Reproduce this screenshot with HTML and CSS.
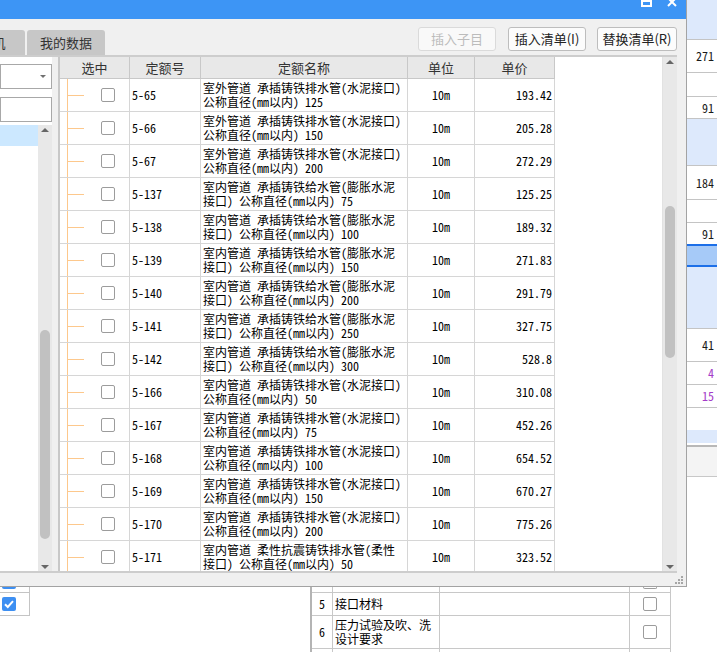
FILE: index.html
```html
<!DOCTYPE html>
<html lang="zh-CN">
<head>
<meta charset="utf-8">
<title>查询</title>
<link rel="stylesheet" href="styles.css">
</head>
<body>
<div class="desktop">
  <div class="bg">
    <div class="bg-main">
      <div class="bottom">
        <div class="lcell">
          <div class="lrow0"><div class="stub-blue"></div></div>
          <div class="lrow1">
            <div class="cb-on"><svg width="14" height="14" viewBox="0 0 14 14"><path d="M3 7.2 L5.8 10 L11 4.2" fill="none" stroke="#fff" stroke-width="2"/></svg></div>
          </div>
        </div>
        <div class="btable">
          <div class="bc"></div><div class="bc"></div><div class="bc"></div><div class="bc bc-top"><div class="stub-gray"></div></div>
          <div class="bc bc-num">5</div><div class="bc bc-txt">接口材料</div><div class="bc"></div><div class="bc bc-chk"><div class="cb"></div></div>
          <div class="bc bc-num">6</div><div class="bc bc-txt">压力试验及吹、洗<br>设计要求</div><div class="bc"></div><div class="bc bc-chk"><div class="cb"></div></div>
          <div class="bc bc-last"></div><div class="bc bc-last"></div><div class="bc bc-last"></div><div class="bc bc-last"></div>
        </div>
      </div>
    </div>
    <div class="strip">
      <div class="srow lb h40"></div>
      <div class="srow h33">271</div>
      <div class="srow h24"></div>
      <div class="srow h22">91</div>
      <div class="srow lb h47"></div>
      <div class="srow h34">184</div>
      <div class="srow h23"></div>
      <div class="srow h21 nob">91</div>
      <div class="srow hl"></div>
      <div class="srow lb h62"></div>
      <div class="srow h33">41</div>
      <div class="srow h23 purple">4</div>
      <div class="srow h23 purple">15</div>
      <div class="srow h22 nob"></div>
      <div class="srow lb h13 nob"></div>
      <div class="srow h2 nob"></div>
      <div class="srow gray-band"></div>
    </div>
  </div>

  <div class="dialog">
    <div class="titlebar">
      <svg class="tb-icon" width="11" height="8" viewBox="0 0 11 8"><rect x="1" y="1" width="9" height="5" fill="none" stroke="#fff" stroke-width="2"/></svg>
      <svg class="tb-icon" width="10" height="7" viewBox="0 0 10 7"><path d="M1 -2 L9 6 M9 -2 L1 6" stroke="#fff" stroke-width="2"/></svg>
    </div>
    <div class="toolbar">
      <div class="tabs">
        <div class="tab">人材机</div>
        <div class="tab">我的数据</div>
      </div>
      <div class="actions">
        <div class="btn btn-dis w78">插入子目</div>
        <div class="btn w78 ml12">插入清单(I)</div>
        <div class="btn w80 ml11">替换清单(R)</div>
      </div>
    </div>
    <div class="content">
      <div class="left">
        <div class="combo"><span class="tri-down"></span></div>
        <div class="textbox"></div>
        <div class="tree">
          <div class="tree-items"><div class="tree-sel"></div></div>
          <div class="vscroll vs-left">
            <div class="arr"><span class="tri-up"></span></div>
            <div class="track"><div class="thumb thumb-left"></div></div>
            <div class="arr arr-bottom"><span class="tri-down dark"></span></div>
          </div>
        </div>
      </div>
      <div class="grid">
        <div class="table">
          <div class="thead">
            <div class="th">选中</div>
            <div class="th">定额号</div>
            <div class="th">定额名称</div>
            <div class="th">单位</div>
            <div class="th">单价</div>
          </div>
          <div class="tbody">
            <div class="tr"><div class="td tree-cell"><div class="cb"></div></div><div class="td">5-65</div><div class="td name">室外管道 承插铸铁排水管(水泥接口)<br>公称直径(mm以内) 125</div><div class="td unit">10m</div><div class="td price">193.42</div></div>
            <div class="tr"><div class="td tree-cell"><div class="cb"></div></div><div class="td">5-66</div><div class="td name">室外管道 承插铸铁排水管(水泥接口)<br>公称直径(mm以内) 150</div><div class="td unit">10m</div><div class="td price">205.28</div></div>
            <div class="tr"><div class="td tree-cell"><div class="cb"></div></div><div class="td">5-67</div><div class="td name">室外管道 承插铸铁排水管(水泥接口)<br>公称直径(mm以内) 200</div><div class="td unit">10m</div><div class="td price">272.29</div></div>
            <div class="tr"><div class="td tree-cell"><div class="cb"></div></div><div class="td">5-137</div><div class="td name">室内管道 承插铸铁给水管(膨胀水泥<br>接口) 公称直径(mm以内) 75</div><div class="td unit">10m</div><div class="td price">125.25</div></div>
            <div class="tr"><div class="td tree-cell"><div class="cb"></div></div><div class="td">5-138</div><div class="td name">室内管道 承插铸铁给水管(膨胀水泥<br>接口) 公称直径(mm以内) 100</div><div class="td unit">10m</div><div class="td price">189.32</div></div>
            <div class="tr"><div class="td tree-cell"><div class="cb"></div></div><div class="td">5-139</div><div class="td name">室内管道 承插铸铁给水管(膨胀水泥<br>接口) 公称直径(mm以内) 150</div><div class="td unit">10m</div><div class="td price">271.83</div></div>
            <div class="tr"><div class="td tree-cell"><div class="cb"></div></div><div class="td">5-140</div><div class="td name">室内管道 承插铸铁给水管(膨胀水泥<br>接口) 公称直径(mm以内) 200</div><div class="td unit">10m</div><div class="td price">291.79</div></div>
            <div class="tr"><div class="td tree-cell"><div class="cb"></div></div><div class="td">5-141</div><div class="td name">室内管道 承插铸铁给水管(膨胀水泥<br>接口) 公称直径(mm以内) 250</div><div class="td unit">10m</div><div class="td price">327.75</div></div>
            <div class="tr"><div class="td tree-cell"><div class="cb"></div></div><div class="td">5-142</div><div class="td name">室内管道 承插铸铁给水管(膨胀水泥<br>接口) 公称直径(mm以内) 300</div><div class="td unit">10m</div><div class="td price">528.8</div></div>
            <div class="tr"><div class="td tree-cell"><div class="cb"></div></div><div class="td">5-166</div><div class="td name">室内管道 承插铸铁排水管(水泥接口)<br>公称直径(mm以内) 50</div><div class="td unit">10m</div><div class="td price">310.08</div></div>
            <div class="tr"><div class="td tree-cell"><div class="cb"></div></div><div class="td">5-167</div><div class="td name">室内管道 承插铸铁排水管(水泥接口)<br>公称直径(mm以内) 75</div><div class="td unit">10m</div><div class="td price">452.26</div></div>
            <div class="tr"><div class="td tree-cell"><div class="cb"></div></div><div class="td">5-168</div><div class="td name">室内管道 承插铸铁排水管(水泥接口)<br>公称直径(mm以内) 100</div><div class="td unit">10m</div><div class="td price">654.52</div></div>
            <div class="tr"><div class="td tree-cell"><div class="cb"></div></div><div class="td">5-169</div><div class="td name">室内管道 承插铸铁排水管(水泥接口)<br>公称直径(mm以内) 150</div><div class="td unit">10m</div><div class="td price">670.27</div></div>
            <div class="tr"><div class="td tree-cell"><div class="cb"></div></div><div class="td">5-170</div><div class="td name">室内管道 承插铸铁排水管(水泥接口)<br>公称直径(mm以内) 200</div><div class="td unit">10m</div><div class="td price">775.26</div></div>
            <div class="tr"><div class="td tree-cell"><div class="cb"></div></div><div class="td">5-171</div><div class="td name">室内管道 柔性抗震铸铁排水管(柔性<br>接口) 公称直径(mm以内) 50</div><div class="td unit">10m</div><div class="td price">323.52</div></div>
          </div>
        </div>
        <div class="vscroll vs-right">
          <div class="arr"><span class="tri-up"></span></div>
          <div class="track"><div class="thumb thumb-right"></div></div>
          <div class="arr arr-bottom"><span class="tri-down dark"></span></div>
        </div>
      </div>
    </div>
    <div class="footer">
      <svg width="8" height="8" viewBox="0 0 8 8" fill="#a6a6a6"><rect x="6" y="0" width="2" height="2"/><rect x="3" y="3" width="2" height="2"/><rect x="6" y="3" width="2" height="2"/><rect x="0" y="6" width="2" height="2"/><rect x="3" y="6" width="2" height="2"/><rect x="6" y="6" width="2" height="2"/></svg>
    </div>
  </div>
</div>
</body>
</html>
```

FILE: styles.css
```css
* { box-sizing: border-box; }

body {
  margin: 0;
  background: #fff;
}

.desktop {
  position: relative;
  width: 717px;
  height: 652px;
  overflow: hidden;
  font-family: "Noto Sans CJK SC", sans-serif;
}

/* ---------- background application ---------- */
.bg {
  display: grid;
  grid-template-columns: 686px 31px;
  height: 652px;
}

.bg-main {
  padding-top: 587px;
  background: #fff;
}

.bottom {
  display: flex;
  height: 65px;
  font: 12px/14px "Noto Sans Mono CJK SC", "Noto Sans CJK SC", monospace;
  color: #000;
}

.lcell { width: 30px; }

.lrow0 {
  height: 6px;
  border-right: 1px solid #c4c4c4;
  border-bottom: 1px solid #c4c4c4;
  padding-left: 2px;
}

.stub-blue {
  width: 14px;
  height: 2px;
  background: #3d8ff2;
  border-radius: 0 0 2px 2px;
}

.lrow1 {
  height: 23px;
  border-right: 1px solid #c4c4c4;
  border-bottom: 1px solid #c4c4c4;
  padding-left: 2px;
  display: flex;
  align-items: center;
}

.cb-on {
  width: 14px;
  height: 14px;
  background: #3d8ff2;
  border-radius: 2px;
  display: flex;
}

.btable {
  margin-left: 280px;
  border-left: 2px solid #b4b4b4;
  display: grid;
  grid-template-columns: 21px 107px 190px 41px;
  grid-template-rows: 6px 23px 33px 4px;
}

.bc {
  border-right: 1px solid #c8c8c8;
  border-bottom: 1px solid #c8c8c8;
  display: flex;
  align-items: center;
}

.bc-top {
  align-items: flex-start;
  justify-content: center;
}

.stub-gray {
  width: 14px;
  height: 2px;
  border: 1px solid #9c9c9c;
  border-top: none;
  border-radius: 0 0 2px 2px;
}

.bc-num { justify-content: center; }
.bc-txt { padding-left: 2px; white-space: nowrap; }
.bc-chk { justify-content: center; }
.bc-last { border-bottom: none; }

.strip {
  display: flex;
  flex-direction: column;
  font: 12px/1 "Noto Sans Mono CJK SC", "Noto Sans CJK SC", monospace;
  color: #1a1a1a;
  background: #fff;
}

.srow {
  flex: none;
  display: flex;
  align-items: center;
  justify-content: flex-end;
  padding-right: 3px;
  background: #fff;
  border-bottom: 1px solid #c4c4c4;
}

.srow.nob { border-bottom: none; }
.lb { background: #dde9fc; }
.purple { color: #a43bc8; }

.h2 { height: 2px; }
.h13 { height: 13px; }
.h21 { height: 21px; }
.h22 { height: 22px; }
.h23 { height: 23px; }
.h24 { height: 24px; }
.h33 { height: 33px; }
.h34 { height: 34px; }
.h40 { height: 40px; }
.h47 { height: 47px; }
.h62 { height: 62px; }

.hl {
  height: 23px;
  background: #a6caf8;
  border-top: 2px solid #1c6fe8;
  border-bottom: 2px solid #1c6fe8;
}

.gray-band {
  height: 32px;
  background: #f4f4f4;
  border-top: 2px solid #b8b8b8;
  border-bottom: 1px solid #c8c8c8;
}

/* ---------- dialog ---------- */
.dialog {
  position: absolute;
  left: 0;
  top: 0;
  width: 687px;
  height: 587px;
  background: #f0f0f0;
  border-right: 1px solid #a3a3a3;
  border-bottom: 1px solid #a3a3a3;
  display: flex;
  flex-direction: column;
}

.titlebar {
  flex: none;
  height: 19px;
  background: #3d95f5;
  display: flex;
  justify-content: flex-end;
  align-items: flex-start;
  gap: 15px;
  padding-right: 9px;
}

.tb-icon { display: block; }

.toolbar {
  flex: none;
  height: 36px;
  display: flex;
  justify-content: space-between;
  padding-right: 9px;
}

.tabs {
  display: flex;
  gap: 2px;
  margin-left: -53px;
  align-self: flex-end;
}

.tab {
  width: 78px;
  height: 25px;
  background: #c7c7c7;
  border-radius: 3px 3px 0 0;
  font-size: 13px;
  line-height: 25px;
  text-align: center;
  color: #333;
}

.actions {
  display: flex;
  margin-top: 8px;
  height: 24px;
}

.btn {
  height: 24px;
  border: 1px solid #bdbdbd;
  border-radius: 3px;
  background: #fcfcfc;
  font-size: 13px;
  line-height: 22px;
  text-align: center;
  color: #222;
}

.btn-dis {
  color: #bcbcbc;
  border-color: #dadada;
  background: #f9f9f9;
}

.w78 { width: 78px; }
.w80 { width: 80px; }
.ml12 { margin-left: 12px; }
.ml11 { margin-left: 11px; }

.content {
  flex: none;
  width: 677px;
  height: 518px;
  border-top: 2px solid #cdcdcd;
  border-bottom: 2px solid #cdcdcd;
  display: flex;
}

.left {
  width: 52px;
  background: #fff;
  display: flex;
  flex-direction: column;
  padding-top: 7px;
}

.combo {
  height: 25px;
  border: 1px solid #a8a8a8;
  background: #fff;
  display: flex;
  align-items: center;
  justify-content: flex-end;
  padding-right: 5px;
}

.tri-down {
  width: 0;
  height: 0;
  border-left: 3px solid transparent;
  border-right: 3px solid transparent;
  border-top: 3px solid #707070;
}

.tri-down.dark {
  border-left-width: 4px;
  border-right-width: 4px;
  border-top: 4px solid #666;
}

.tri-up {
  width: 0;
  height: 0;
  border-left: 4px solid transparent;
  border-right: 4px solid transparent;
  border-bottom: 4px solid #666;
}

.textbox {
  height: 25px;
  margin-top: 8px;
  border: 1px solid #a8a8a8;
  background: #fff;
}

.tree {
  flex: 1;
  margin-top: 3px;
  display: flex;
}

.tree-items { flex: 1; background: #fff; }

.tree-sel {
  height: 21px;
  background: #cce8ff;
}

.vscroll {
  background: #e8e8e8;
  display: flex;
  flex-direction: column;
  align-items: center;
}

.vs-left { width: 14px; }
.vs-right { width: 15px; margin-left: auto; border-left: 1px solid #e2e2e2; }

.arr {
  height: 12px;
  width: 100%;
  display: flex;
  justify-content: center;
  padding-top: 3px;
}

.arr-bottom {
  padding-top: 0;
  align-items: flex-end;
  padding-bottom: 2px;
}

.track {
  flex: 1;
  width: 100%;
  display: flex;
  flex-direction: column;
  align-items: center;
}

.thumb {
  width: 10px;
  background: #c1c1c1;
  border-radius: 5px;
}

.thumb-left { margin-top: 193px; height: 209px; }
.thumb-right { margin-top: 137px; height: 152px; }

.grid {
  flex: 1;
  margin-left: 6px;
  border-left: 2px solid #c8c8c8;
  background: #fff;
  display: flex;
}

.table {
  width: 495px;
  display: flex;
  flex-direction: column;
}

.thead {
  display: grid;
  grid-template-columns: 70px 71px 207px 67px 80px;
  height: 22px;
  background: #e8e8e8;
  border-bottom: 1px solid #c8c8c8;
}

.th {
  border-right: 1px solid #c8c8c8;
  font-size: 13px;
  line-height: 21px;
  text-align: center;
  color: #333;
}

.tbody {
  height: 492px;
  overflow: hidden;
}

.tr {
  display: grid;
  grid-template-columns: 70px 71px 207px 67px 80px;
  height: 33px;
  border-bottom: 1px solid #d6d6d6;
}

.td {
  border-right: 1px solid #d6d6d6;
  display: flex;
  align-items: center;
  padding: 0 2px;
  font: 12px/14px "Noto Sans Mono CJK SC", "Noto Sans CJK SC", monospace;
  color: #000;
  white-space: nowrap;
  overflow: hidden;
}

.tree-cell {
  padding-left: 41px;
  background:
    linear-gradient(#fdc88c, #fdc88c) 7px 0 / 1px 100% no-repeat,
    linear-gradient(#fdc88c, #fdc88c) 8px 50% / 16px 1px no-repeat;
}

.cb {
  width: 14px;
  height: 14px;
  border: 1px solid #9c9c9c;
  border-radius: 2px;
  background: #fff;
}

.unit { justify-content: center; }
.price { justify-content: flex-end; }

.footer {
  flex: 1;
  display: flex;
  justify-content: flex-end;
  align-items: center;
  padding-right: 3px;
}
```
